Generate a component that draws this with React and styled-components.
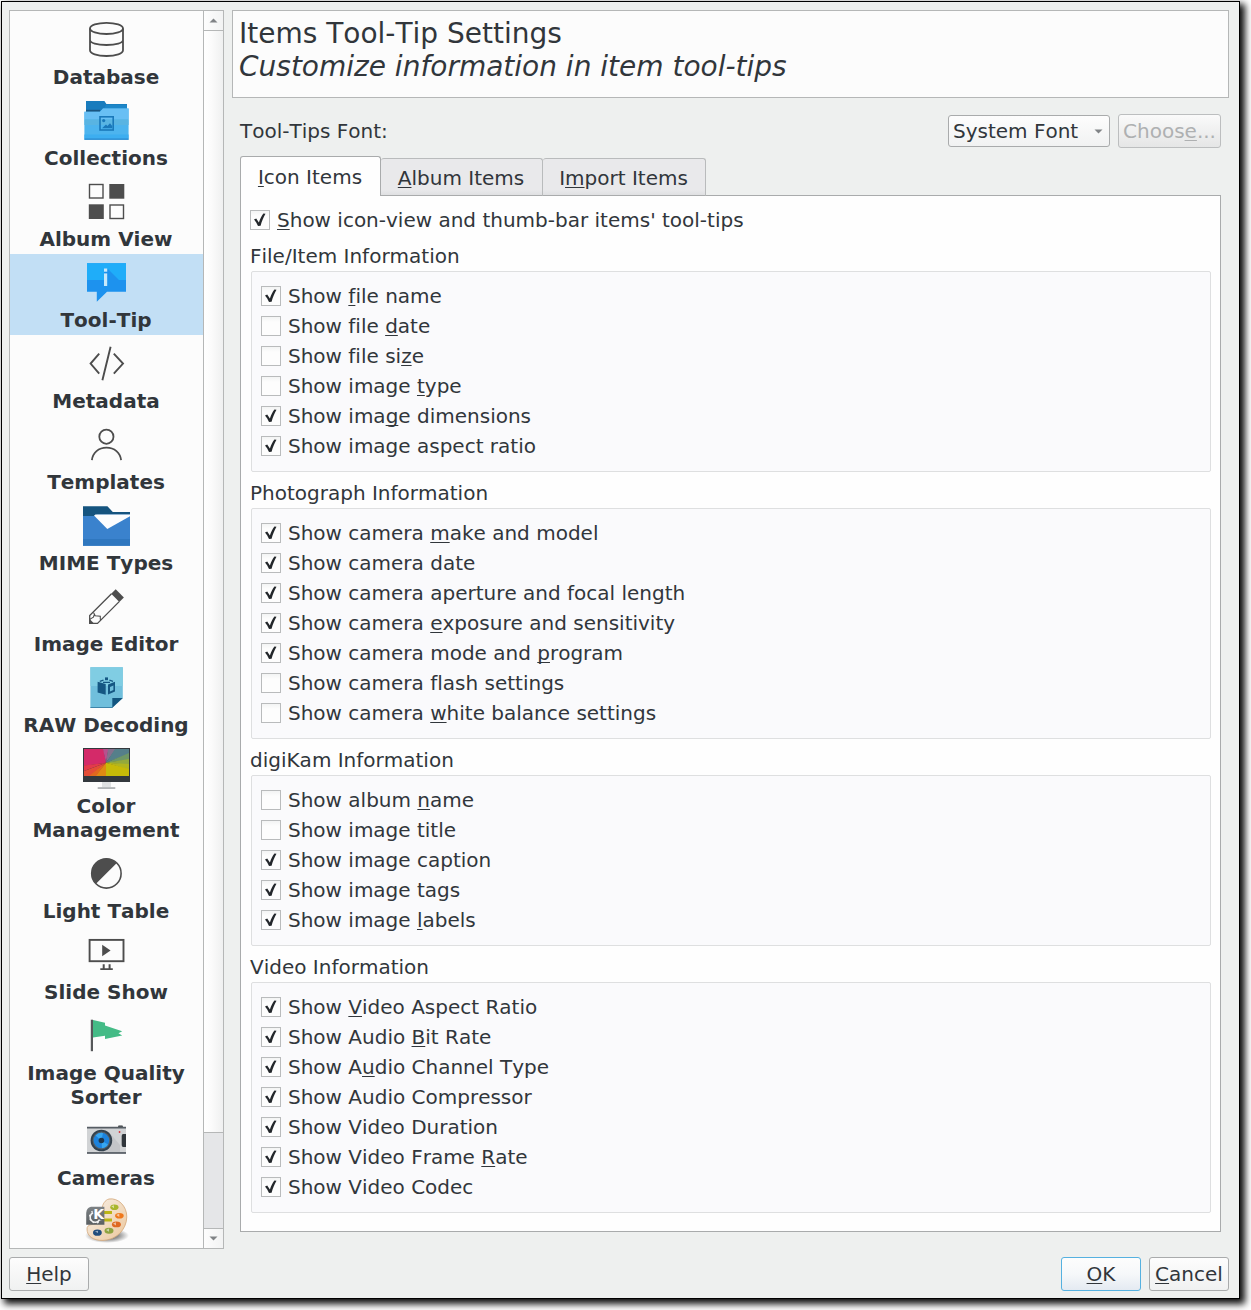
import React from "react";
import styled, { createGlobalStyle } from "styled-components";

const Global = createGlobalStyle`
  * { box-sizing: border-box; }
  html, body { margin: 0; background: #fff; overflow: hidden; }
  body {
    font-family: "DejaVu Sans", Verdana, sans-serif;
    font-size: 20px;
    line-height: 24px;
    font-kerning: none;
    font-variant-ligatures: none;
    color: #31363b;
  }
`;

const Page = styled.div`
  width: 1251px;
  height: 1310px;
  padding: 1px;
  overflow: hidden;
`;

const Dialog = styled.div`
  width: 1239px;
  height: 1298px;
  border: 1px solid #000;
  background: #eef0ef;
  box-shadow: 4px 4px 7px 1px rgba(0, 0, 0, 0.95);
  padding: 8px 10px 7px 7px;
  display: flex;
  flex-direction: column;
  justify-content: space-between;
`;

const Body = styled.div`
  display: flex;
  gap: 8px;
  height: 1239px;
`;

const Sidebar = styled.nav`
  width: 215px;
  border: 1px solid #b5b7b7;
  background: #fcfcfc;
  display: flex;
  overflow: hidden;
`;

const List = styled.div`
  width: 193px;
  overflow: hidden;
`;

const Entry = styled.div`
  flex: none;
  padding: 4px 0 3px;
  background: ${(p) => (p.$active ? "#c2dff5" : "transparent")};
`;

const IconBox = styled.div`
  display: flex;
  height: 48px;
  margin: 0 0 2px 72px;
  svg { display: block; overflow: visible; }
`;

const EntryLabel = styled.div`
  font-weight: bold;
  text-align: center;
  padding-right: 1px;
  white-space: pre-line;
`;

const Scroll = styled.div`
  width: 20px;
  border-left: 1px solid #b5b7b7;
  display: flex;
  flex-direction: column;
`;

const ScrollButton = styled.div`
  height: 19px;
  display: flex;
  align-items: center;
  justify-content: center;
  padding-right: 1px;
  background: linear-gradient(90deg, #fdfdfd, #f2f3f3);
`;

const ScrollHandle = styled.div`
  height: 1103px;
  border: solid #b5b7b7;
  border-width: 1px 0;
  background: linear-gradient(90deg, #ffffff, #fbfbfb 40%, #eff0f0);
`;

const ScrollTrack = styled.div`
  flex: 1;
  background: #e5e6e8;
  border-bottom: 1px solid #b5b7b7;
`;

const Content = styled.main`
  width: 997px;
`;

const Header = styled.header`
  height: 88px;
  border: 1px solid #b5b7b7;
  background: #fcfcfc;
  padding: 6px 6px 0;
  font-size: 28px;
  line-height: 33px;
`;

const Subtitle = styled.div`
  font-style: italic;
`;

const FontRow = styled.div`
  display: flex;
  align-items: center;
  height: 34px;
  margin: 16px 8px 8px;
  gap: 8px;
`;

const FontLabel = styled.div`
  flex: 1;
`;

const Combo = styled.div`
  width: 162px;
  height: 32px;
  border: 1px solid #a9abac;
  border-radius: 3px;
  background: linear-gradient(#fdfdfd, #f1f2f2);
  display: flex;
  align-items: center;
  justify-content: space-between;
  padding: 0 6px 0 4px;
`;

const Button = styled.button`
  width: ${(p) => p.$width || 80}px;
  height: 34px;
  padding: 0;
  border: 1px solid ${(p) => (p.$primary ? "#55b1e0" : p.disabled ? "#bcbebf" : "#a9abac")};
  border-radius: 3px;
  background: ${(p) =>
    p.$primary
      ? "linear-gradient(#fdfdfd, #f6f8fa 50%, #e4eaf2)"
      : p.disabled
      ? "linear-gradient(#fafafa, #e5e6e6)"
      : "linear-gradient(#fdfdfd, #f0f1f1)"};
  color: ${(p) => (p.disabled ? "#aeb0b1" : "#31363b")};
  font: inherit;
  font-kerning: none;
  white-space: nowrap;
`;

const Tabs = styled.div`
  display: flex;
  align-items: flex-end;
  height: 40px;
  margin: 0 8px -1px;
  position: relative;
`;

const Tab = styled.div`
  width: ${(p) => p.$width}px;
  height: ${(p) => (p.$active ? 40 : 38)}px;
  border: 1px solid ${(p) => (p.$active ? "#a9abac" : "#b9bbbc")};
  border-left-width: ${(p) => (p.$joined ? 0 : 1)}px;
  border-bottom: ${(p) => (p.$active ? "0" : "1px solid #a9abac")};
  border-radius: 3px 3px 0 0;
  background: ${(p) => (p.$active ? "#fefefe" : "linear-gradient(#e9e9eb 85%, #dfe0e2)")};
  padding-right: 1px;
  text-align: center;
  line-height: ${(p) => (p.$active ? 41 : 39)}px;
`;

const Pane = styled.section`
  height: 1037px;
  margin: 0 8px;
  border: 1px solid #a9abac;
  background: #fefefe;
  padding: 9px 9px 0;
`;

const CheckRow = styled.div`
  display: flex;
  align-items: center;
  gap: 7px;
  height: 30px;
  white-space: nowrap;
`;

const Box = styled.span`
  width: 20px;
  height: 20px;
  border: 1px solid #b9bbbc;
  background: linear-gradient(#f3f4f4, #fdfdfd 5px);
  display: flex;
  svg { display: block; }
`;

const GroupTitle = styled.h3`
  margin: 9px 0 3px;
  font: inherit;
  font-kerning: none;
`;

const Group = styled.div`
  margin: 0 0 0 1px;
  border: 1px solid #dedfe0;
  border-radius: 2px;
  background: #fafafc;
  padding: 9px 9px 10px;
`;

const Footer = styled.footer`
  display: flex;
  justify-content: space-between;
`;

const FooterRight = styled.div`
  display: flex;
  gap: 8px;
`;

const Key = styled.span`
  text-decoration: underline;
  text-decoration-thickness: 1px;
  text-underline-offset: 2px;
  text-decoration-skip-ink: none;
`;

/* "&" marks the accelerator letter. */
function Label({ text }) {
  const at = text.indexOf("&");
  if (at < 0) return <span>{text}</span>;
  return (
    <span>
      {text.slice(0, at)}
      <Key>{text[at + 1]}</Key>
      {text.slice(at + 2)}
    </span>
  );
}

function Check({ text, on }) {
  return (
    <CheckRow>
      <Box>
        {on && (
          <svg width="18" height="18" viewBox="0 0 18 18">
            <path d="M3 8.5L5.2 7.5L7.9 11.4C9 7.8 10.4 5 12.4 2.4L14.5 2.7C12.5 6.2 10.7 10.4 9.6 14.8L7 15C6 12.6 4.6 10.4 3 8.5Z" fill="#23272b" />
          </svg>
        )}
      </Box>
      <Label text={text} />
    </CheckRow>
  );
}

const Arrow = ({ up }) => (
  <svg width="9" height="5" viewBox="0 0 9 5">
    <path d={up ? "M0.5 4.5L4.5 0.5L8.5 4.5Z" : "M0.5 0.5L4.5 4.5L8.5 0.5Z"} fill="#808386" />
  </svg>
);

const LogoLetter = styled.text`
  font: bold 14px "DejaVu Sans", sans-serif;
  fill: #fff;
`;

const ink = "#4d4d4d";

const icons = {
  database: (
    <g fill="none" stroke={ink} strokeWidth="1.8">
      <ellipse cx="24.5" cy="13.4" rx="16.5" ry="5.6" />
      <path d="M8 13.4V35.2C8 38.4 15 41 24.5 41S41 38.4 41 35.2V13.4M8 25C8 28 15 30 24.5 30S41 28 41 25" />
    </g>
  ),
  collections: (
    <g>
      <path d="M4 5H22.4L24.4 8H45V16H4Z" fill="#197cbd" />
      <path d="M24 8.8H45V12.4H22Z" fill="#1d86c8" />
      <path d="M4 13.8H18V16H4Z" fill="#1a5580" />
      <path d="M2.4 15.7H18L21 12.4H46.6V43.7H2.4Z" fill="#4db4ee" />
      <path d="M2.4 15.7H18L21 12.4H46.6V23.5H2.4Z" fill="#68bff4" />
      <path d="M2.4 23.5H46.6V29H2.4Z" fill="#59b4e2" />
      <path d="M2.4 38.5H46.6V42.5H2.4Z" fill="#3daef0" />
      <path d="M2.4 42.4H46.6V43.7H2.4Z" fill="#2286cf" />
      <rect x="18" y="20.8" width="13.2" height="13.2" fill="none" stroke="#1a78ba" strokeWidth="1.6" />
      <circle cx="21.7" cy="24.6" r="1.6" fill="#1a78ba" />
      <path d="M20 32.2L24 28.6L25.4 30L28 27.2L30.2 30V32.2Z" fill="#1a78ba" />
    </g>
  ),
  album: (
    <g fill={ink}>
      <rect x="7.5" y="7.5" width="13.5" height="13.5" fill="none" stroke={ink} strokeWidth="1.4" />
      <rect x="27.3" y="7" width="15" height="14.7" />
      <rect x="6.8" y="27.3" width="15" height="14.7" />
      <rect x="28" y="28" width="13.5" height="13.5" fill="none" stroke={ink} strokeWidth="1.4" />
    </g>
  ),
  tooltip: (
    <g>
      <path d="M5 5.3H44V33.8H25L14.8 43.7V33.8H5Z" fill="#1d92ee" />
      <path d="M5 5.3H44V22H37L26 11L22 14V22H5Z" fill="#1fadf9" />
      <rect x="22" y="10.5" width="3.2" height="3.2" fill="#c8e8fa" />
      <rect x="22" y="15.4" width="3.2" height="12.6" fill="#c8e8fa" />
    </g>
  ),
  metadata: (
    <path d="M17.2 14.7L8.6 24.6L17.2 34.6M31.8 14.7L41 24.6L31.8 34.6M28.6 7.8L20.4 41.2" fill="none" stroke={ink} strokeWidth="1.9" />
  ),
  templates: (
    <g fill="none" stroke={ink} strokeWidth="1.8">
      <circle cx="24.4" cy="16.7" r="7.1" />
      <path d="M9.9 40.2C10.7 32.8 16.6 27.7 24.5 27.7S38.3 32.8 39.1 40.2" />
    </g>
  ),
  mime: (
    <g>
      <path d="M1 5.2H25.4L30.8 11H48V16H1Z" fill="#15547f" />
      <path d="M1 15H13L15 13.6H48V44.8H1Z" fill="#3a82cd" />
      <path d="M1 38H48V44.8H1Z" fill="#2f77bf" />
      <path d="M12 14.6L13.5 13.5H48V15.3L25.3 28Z" fill="#fcfdfe" />
    </g>
  ),
  editor: (
    <g>
      <path d="M29.5 11.8L7.7 33.6V41.4H15.5L37.2 19.6" fill="none" stroke={ink} strokeWidth="1.3" />
      <path d="M33.7 7.2L41.9 15.4L37.4 19.9L29.2 11.7Z" fill={ink} />
      <path d="M11.5 30.5L13.2 33.8L18.3 34.2V37L18.6 38.3M12.3 32.8L11.4 35.2L7.7 37.4" fill="none" stroke={ink} strokeWidth="1.1" />
      <path d="M7.4 36.8L12 41.6H7.4Z" fill={ink} />
    </g>
  ),
  raw: (
    <g>
      <path d="M8.4 4.2H40.8V35L30.3 44.7H8.4Z" fill="#70bfdc" />
      <path d="M8.4 4.2H40.8V23H8.4Z" fill="#80cde3" />
      <path d="M8.4 44H30.5V44.9H8.4Z" fill="#347da3" />
      <path d="M30.3 35H40.8L30.3 44.7Z" fill="#12557f" />
      <path d="M15.6 18.8L23.7 21V31.8L15.6 29.6Z" fill="#155783" />
      <path d="M26 21.6L33 18.8V28.6L26 31.4ZM28 24V28.6L31.4 27V22.4Z" fill="#155783" fillRule="evenodd" />
      <rect x="23" y="14.4" width="3" height="2.8" fill="#155783" />
      <path d="M17.8 18.4L21.5 17.2M31 18.4L27.4 17.2M21 19.4H28" stroke="#155783" strokeWidth="1.3" />
    </g>
  ),
  color: (
    <g>
      <rect x="1" y="4" width="47" height="34" fill="#33383d" />
      <path d="M24 18.7L2 22V5H21.5Z" fill="#d42a69" />
      <path d="M24 18.7L21 5H26.5Z" fill="#b8508d" />
      <path d="M24 18.7L26 5H34Z" fill="#84708c" />
      <path d="M24 18.7L33 5H47V10Z" fill="#557f8a" />
      <path d="M24 18.7L47 9V16Z" fill="#6f9766" />
      <path d="M24 18.7L47 15V21Z" fill="#94a93c" />
      <path d="M24 18.7L47 20V26Z" fill="#b2b51f" />
      <path d="M24 18.7L47 25V32H24Z" fill="#c7ba08" />
      <path d="M24 18.7L24 32H13Z" fill="#df8a13" />
      <path d="M24 18.7L14 32H5Z" fill="#e2681f" />
      <path d="M24 18.7L7 32H2V27Z" fill="#e34d37" />
      <path d="M24 18.7L2 27V21.5Z" fill="#e43a4b" />
      <rect x="20" y="38" width="9" height="5" fill="#dfe1e2" />
      <rect x="15.7" y="43.2" width="17.6" height="1.7" fill="#a9acae" />
    </g>
  ),
  light: (
    <g>
      <circle cx="24.4" cy="24.4" r="14.7" fill="none" stroke={ink} strokeWidth="1.6" />
      <path d="M14 34.8A14.7 14.7 0 0 1 34.8 14Z" fill={ink} />
    </g>
  ),
  slides: (
    <g fill={ink}>
      <rect x="7.6" y="9.9" width="33.9" height="21.3" fill="none" stroke={ink} strokeWidth="1.9" />
      <path d="M20.2 14.8L28.6 20.6L20.2 26.3Z" />
      <path d="M20.7 34.3H22.7V38.2H26.6V34.3H28.6V38.2H30.8V40H18.3V38.2H20.7Z" />
    </g>
  ),
  flag: (
    <g>
      <path d="M11 9L23 11.8V14.6L40.2 20.2L36.5 22.3L40.2 24.5L23 28V24.8L11 26.5Z" fill="#44bb86" />
      <rect x="8.8" y="8.7" width="2.2" height="31.5" fill="#56585a" />
    </g>
  ),
  camera: (
    <g>
      <rect x="36" y="9.5" width="5" height="3" rx="1" fill="#2f3438" />
      <rect x="5" y="10.8" width="39" height="27" fill="#d1d3d5" />
      <path d="M27 16L38 29V36.3H19Z" fill="#c3c5c8" />
      <rect x="5" y="10.8" width="39" height="1.7" fill="#565d64" />
      <rect x="5" y="36.1" width="39" height="1.7" fill="#565d64" />
      <circle cx="19.4" cy="24.5" r="10.8" fill="#33414d" />
      <circle cx="19.4" cy="24.5" r="8.9" fill="#54606a" />
      <circle cx="19.4" cy="24.5" r="7.8" fill="#1d83dd" />
      <path d="M19.4 24.5L13.5 19.5A7.8 7.8 0 0 1 21 16.9ZM19.4 24.5L26 28.6A7.8 7.8 0 0 1 20 32.2Z" fill="#37a6f0" />
      <circle cx="19.4" cy="24.5" r="2.8" fill="#20364b" />
      <path d="M44 18H41.2Q39.7 18 39.7 20V29Q39.7 31 41.2 31H44Z" fill="#30363b" />
      <rect x="36.8" y="15.1" width="1.5" height="1.8" fill="#d62c35" />
    </g>
  ),
  palette: (
    <g>
      <defs>
        <radialGradient id="floor">
          <stop offset="0.5" stopColor="#8b8b8b" />
          <stop offset="1" stopColor="#8b8b8b" stopOpacity="0" />
        </radialGradient>
        <linearGradient id="wood" x1="0" y1="0" x2="1" y2="1">
          <stop offset="0" stopColor="#f8f2ea" />
          <stop offset="1" stopColor="#ecc79c" />
        </linearGradient>
        <linearGradient id="plate" x1="0" y1="0" x2="0" y2="1">
          <stop offset="0" stopColor="#7d8285" />
          <stop offset="1" stopColor="#5a5f62" />
        </linearGradient>
      </defs>
      <ellipse cx="25" cy="38.5" rx="22" ry="7.5" fill="url(#floor)" />
      <path d="M27 2C36 .5 45 9 44.8 20C44.5 33 34 43 21 43.4C11 43.6 5 39 5 32C5 27 10 28 17 26C23 23 19 17 20 12C20.5 7 23 3 27 2Z" fill="url(#wood)" stroke="#d3a779" strokeWidth=".8" />
      <path d="M22 14H30V17H22ZM22 21.5H30V24.5H22Z" fill="#bcb516" />
      <path d="M9 9.8H22.4V27.8H4.2V16Q4.6 10.6 9 9.8Z" fill="url(#plate)" />
      <path d="M11 15.8A5 5 0 1 0 17.6 22.6" fill="none" stroke="#f3f3f3" strokeWidth="1.6" />
      <path d="M10.6 14.4A6.2 6.2 0 1 0 18.8 23.4" fill="none" stroke="#f3f3f3" strokeWidth="1.4" strokeDasharray="1.6 2.6" />
      <LogoLetter x="11.2" y="22.4">K</LogoLetter>
      <ellipse cx="32.4" cy="10.2" rx="4.1" ry="2.8" fill="#a9b62c" />
      <ellipse cx="37.4" cy="18.7" rx="4.3" ry="2.8" fill="#ef781b" />
      <ellipse cx="34.4" cy="27.4" rx="4.5" ry="2.9" fill="#df6821" />
      <ellipse cx="27" cy="33.8" rx="4.5" ry="3" fill="#8fa33e" />
      <ellipse cx="15.4" cy="35.7" rx="4.4" ry="3.1" fill="#204d7d" />
      <path d="M29.3 9.3L32 8.2V11.3ZM34.2 18L37.3 16.5V20ZM31 26.6L34 25.2V28.5ZM24 33L27 31.5V34.8ZM13 34.6L16 33.8V36Z" fill="#fff" opacity=".55" />
    </g>
  ),
};

const entries = [
  ["database", "Database"],
  ["collections", "Collections"],
  ["album", "Album View"],
  ["tooltip", "Tool-Tip"],
  ["metadata", "Metadata"],
  ["templates", "Templates"],
  ["mime", "MIME Types"],
  ["editor", "Image Editor"],
  ["raw", "RAW Decoding"],
  ["color", "Color\nManagement"],
  ["light", "Light Table"],
  ["slides", "Slide Show"],
  ["flag", "Image Quality\nSorter"],
  ["camera", "Cameras"],
  ["palette", ""],
];

const groups = [
  ["File/Item Information", [
    ["Show &file name", true],
    ["Show file &date", false],
    ["Show file si&ze", false],
    ["Show image &type", false],
    ["Show ima&ge dimensions", true],
    ["Show image aspect ratio", true],
  ]],
  ["Photograph Information", [
    ["Show camera &make and model", true],
    ["Show camera date", true],
    ["Show camera aperture and focal length", true],
    ["Show camera &exposure and sensitivity", true],
    ["Show camera mode and &program", true],
    ["Show camera flash settings", false],
    ["Show camera &white balance settings", false],
  ]],
  ["digiKam Information", [
    ["Show album &name", false],
    ["Show image title", false],
    ["Show image caption", true],
    ["Show image tags", true],
    ["Show image &labels", true],
  ]],
  ["Video Information", [
    ["Show &Video Aspect Ratio", true],
    ["Show Audio &Bit Rate", true],
    ["Show A&udio Channel Type", true],
    ["Show Audio Compressor", true],
    ["Show Video Duration", true],
    ["Show Video Frame &Rate", true],
    ["Show Video Codec", true],
  ]],
];

export default function App() {
  return (
    <Page>
      <Global />
      <Dialog>
        <Body>
          <Sidebar>
            <List>
              {entries.map(([icon, label]) => (
                <Entry key={icon} $active={icon === "tooltip"}>
                  <IconBox>
                    <svg width="48" height="48" viewBox="0 0 48 48">{icons[icon]}</svg>
                  </IconBox>
                  <EntryLabel>{label}</EntryLabel>
                </Entry>
              ))}
            </List>
            <Scroll>
              <ScrollButton><Arrow up /></ScrollButton>
              <ScrollHandle />
              <ScrollTrack />
              <ScrollButton><Arrow /></ScrollButton>
            </Scroll>
          </Sidebar>
          <Content>
            <Header>
              <div>Items Tool-Tip Settings</div>
              <Subtitle>Customize information in item tool-tips</Subtitle>
            </Header>
            <FontRow>
              <FontLabel>Tool-Tips Font:</FontLabel>
              <Combo>
                <span>System Font</span>
                <Arrow />
              </Combo>
              <Button disabled $width={103}><Label text="Choos&e..." /></Button>
            </FontRow>
            <Tabs>
              <Tab $active $width={141}><Label text="&Icon Items" /></Tab>
              <Tab $joined $width={162}><Label text="&Album Items" /></Tab>
              <Tab $joined $width={163}><Label text="I&mport Items" /></Tab>
            </Tabs>
            <Pane>
              <Check on text="&Show icon-view and thumb-bar items' tool-tips" />
              {groups.map(([title, rows]) => (
                <React.Fragment key={title}>
                  <GroupTitle>{title}</GroupTitle>
                  <Group>
                    {rows.map(([text, on]) => <Check key={text} text={text} on={on} />)}
                  </Group>
                </React.Fragment>
              ))}
            </Pane>
          </Content>
        </Body>
        <Footer>
          <Button><Label text="&Help" /></Button>
          <FooterRight>
            <Button $primary><Label text="&OK" /></Button>
            <Button><Label text="&Cancel" /></Button>
          </FooterRight>
        </Footer>
      </Dialog>
    </Page>
  );
}
